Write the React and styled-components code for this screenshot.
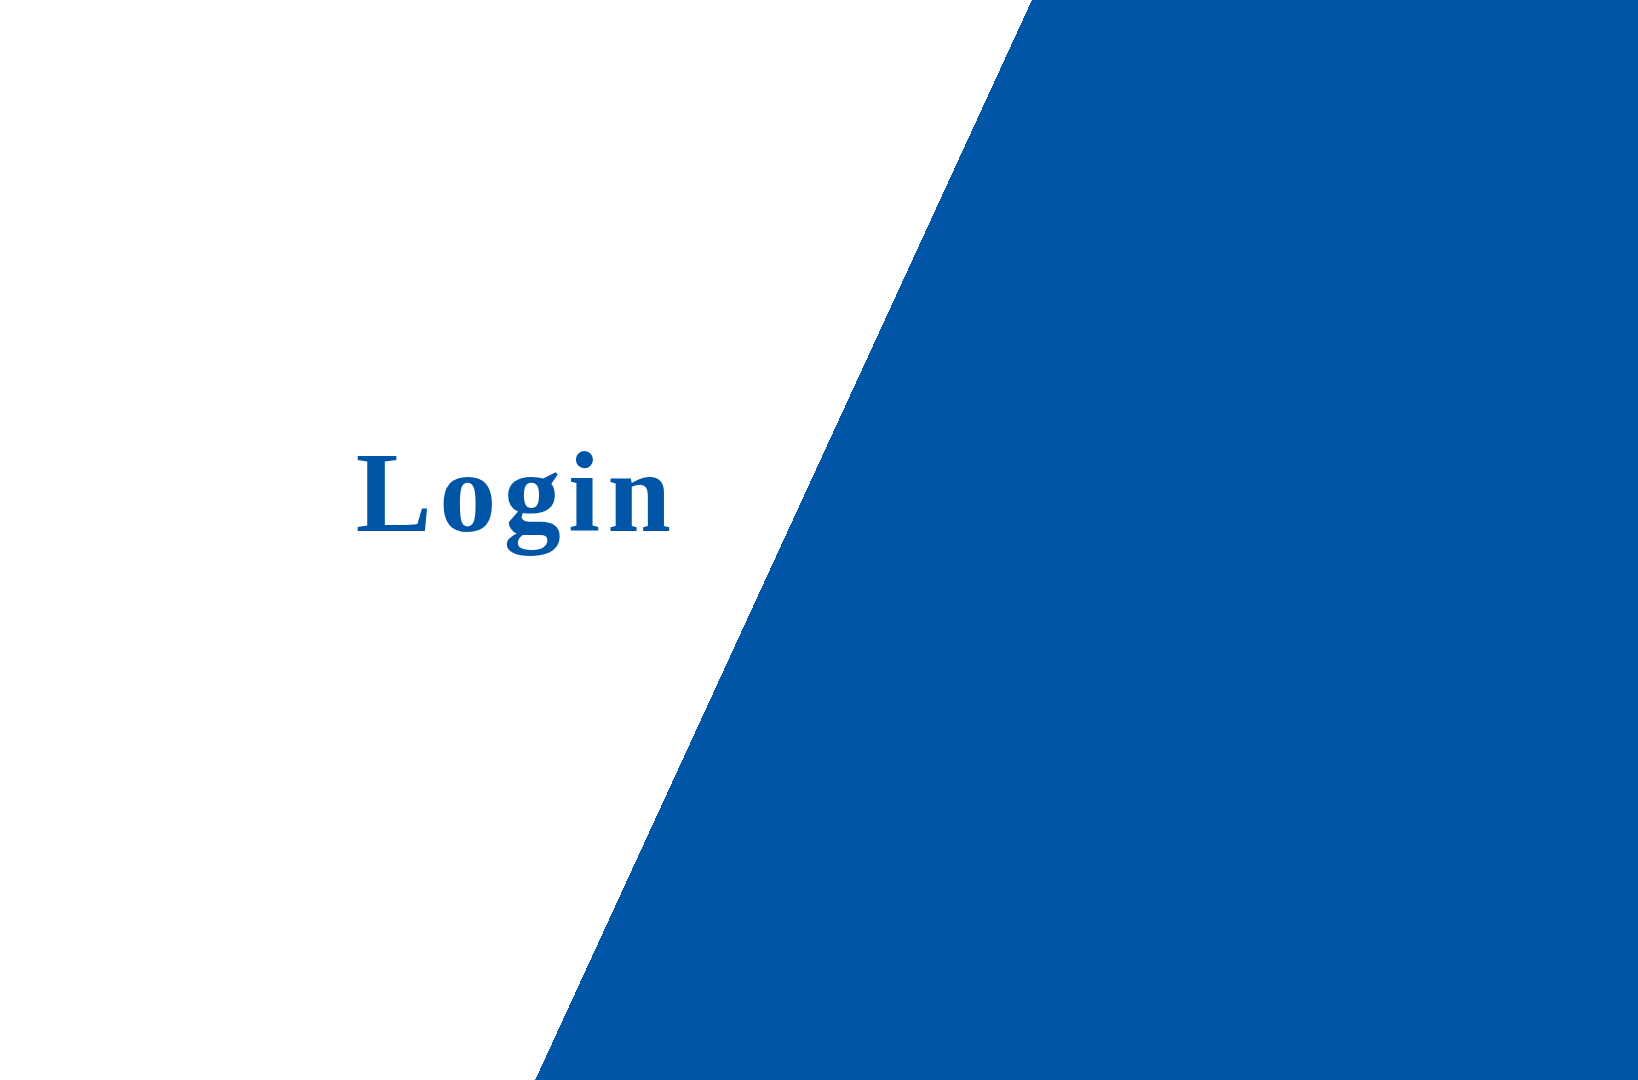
import React from 'react'
import styled, { createGlobalStyle } from 'styled-components'

const BLUE = '#0055a6'

const GlobalStyle = createGlobalStyle`
  html, body {
    margin: 0;
    padding: 0;
    height: 100%;
  }
  #root {
    height: 100%;
  }
`

// the blue wedge is just a hard stop in the page background
const Page = styled('div')`
  display: grid;
  grid-template-columns: 1034px 1fr;
  width: 100%;
  height: 100vh;
  overflow: hidden;
  background: linear-gradient(
    114.7deg,
    #ffffff 48.34%,
    ${BLUE} 48.34%
  );
`

const LeftPanel = styled('section')`
  display: flex;
  align-items: center;
  justify-content: center;
`

const Title = styled('h1')`
  margin: 0 0 94px 0;
  font-family: 'Liberation Serif', 'Times New Roman', serif;
  font-weight: 700;
  font-size: 114px;
  letter-spacing: 7.5px;
  color: ${BLUE};
`

const RightPanel = styled('section')``

const App = () => (
  <>
    <GlobalStyle />
    <Page>
      <LeftPanel>
        <Title>Login</Title>
      </LeftPanel>
      <RightPanel />
    </Page>
  </>
)

export default App
